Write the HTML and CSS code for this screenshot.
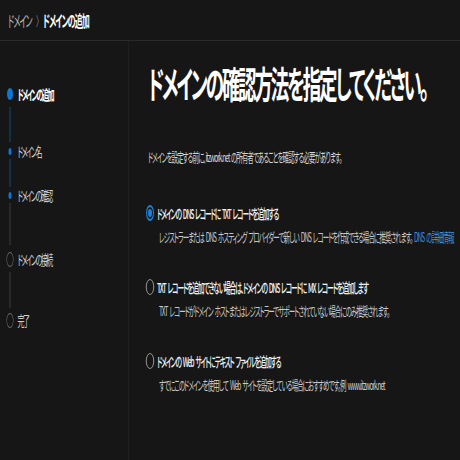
FILE: index.html
```html
<!DOCTYPE html>
<html lang="ja">
<head>
<meta charset="utf-8">
<title>ドメインの追加</title>
<link rel="stylesheet" href="styles.css">
</head>
<body>
<div class="app">
  <header class="crumbs">
    <span class="crumb">ドメイン</span>
    <span class="sep">〉</span>
    <span class="crumb current">ドメインの追加</span>
  </header>
  <div class="body">
    <nav class="steps">
      <div class="step active">
        <span class="marker"><span class="dot big"></span></span>
        <span class="label">ドメインの追加</span>
      </div>
      <div class="conn done c1"></div>
      <div class="step sub">
        <span class="marker"><span class="dot small"></span></span>
        <span class="label">ドメイン名</span>
      </div>
      <div class="conn done c2"></div>
      <div class="step sub">
        <span class="marker"><span class="dot small"></span></span>
        <span class="label">ドメインの確認</span>
      </div>
      <div class="conn c3"></div>
      <div class="step todo s4">
        <span class="marker"><span class="dot ring"></span></span>
        <span class="label">ドメインの接続</span>
      </div>
      <div class="conn c4"></div>
      <div class="step todo s5">
        <span class="marker"><span class="dot ring"></span></span>
        <span class="label">完了</span>
      </div>
    </nav>
    <main class="content">
      <h1 class="title">ドメインの確認方法を指定してください。</h1>
      <p class="intro">ドメインを設定する前に、itzwork.net の所有者であることを確認する必要があります。</p>
      <div class="options">
        <div class="option">
          <div class="opt-head">
            <span class="radio checked"></span>
            <span class="opt-label">ドメインの DNS レコードに TXT レコードを追加する</span>
          </div>
          <p class="opt-desc">レジストラーまたは DNS ホスティング プロバイダーで新しい DNS レコードを作成できる場合に推奨されます。 <a class="link" href="#">DNS の詳細情報</a></p>
        </div>
        <div class="option">
          <div class="opt-head">
            <span class="radio"></span>
            <span class="opt-label">TXT レコードを追加できない場合は、ドメインの DNS レコードに MX レコードを追加します</span>
          </div>
          <p class="opt-desc">TXT レコードがドメイン ホストまたはレジストラーでサポートされていない場合にのみ推奨されます。</p>
        </div>
        <div class="option">
          <div class="opt-head">
            <span class="radio"></span>
            <span class="opt-label">ドメインの Web サイトにテキスト ファイルを追加する</span>
          </div>
          <p class="opt-desc">すでにこのドメインを使用して Web サイトを設定している場合におすすめです。例 www.itzwork.net</p>
        </div>
      </div>
    </main>
  </div>
</div>
</body>
</html>
```
FILE: styles.css
```css
html, body {
  margin: 0;
  padding: 0;
  width: 460px;
  height: 460px;
  overflow: hidden;
  background: #161616;
}

.app {
  width: 920px;
  height: 460px;
  transform: scaleX(0.5);
  transform-origin: 0 0;
  display: flex;
  flex-direction: column;
  font-family: "Noto Sans CJK JP", "Noto Sans", sans-serif;
  font-feature-settings: "palt";
  color: #e6e6e6;
  background: #161616;
  overflow: hidden;
}

.crumbs {
  height: 40px;
  border-bottom: 1px solid #2a2a2a;
  display: flex;
  align-items: center;
  padding-left: 16px;
  font-size: 16px;
  letter-spacing: -1.9px;
  gap: 9px;
  flex: none;
}

.crumb { color: #b8b8b8; }
.crumb.current { color: #ffffff; font-weight: 700; }
.sep { color: #8a8a8a; font-size: 13px; }

.body {
  flex: 1;
  display: flex;
}

.steps {
  width: 256px;
  border-right: 1px solid #262626;
  flex: none;
  display: flex;
  flex-direction: column;
  padding-top: 45px;
}

.step {
  display: flex;
  align-items: center;
  height: 16px;
}

.marker {
  width: 36px;
  flex: none;
  display: flex;
  justify-content: center;
  align-items: center;
  margin-left: 2px;
}

.label {
  font-size: 14px;
  letter-spacing: -3px;
  color: #cfcfcf;
  margin-left: -3px;
  white-space: nowrap;
}

.step.active .label { color: #ffffff; font-weight: 700; }

.dot { display: block; border-radius: 50%; }
.dot.big { width: 12px; height: 12px; background: #0a78d4; }
.dot.small { width: 6px; height: 7px; background: #0a78d4; }
.dot.ring { border: 1.5px solid #6c6c6c; box-sizing: border-box; width: 14px; height: 15px; }

.conn {
  width: 2px;
  margin-left: 19px;
  background: #3c3c3c;
}
.conn.done { background: #114a80; }
.c1 { margin-top: 5px; height: 35px; margin-bottom: 1px; }
.c2 { height: 28px; }
.c3 { height: 42px; }
.s4 { margin-top: 6px; }
.c4 { margin-top: 5px; height: 36px; margin-bottom: 4px; }

.content {
  flex: 1;
  padding: 21px 0 0 39px;
  overflow: hidden;
}

.title {
  margin: 0;
  font-size: 37px;
  line-height: 43px;
  letter-spacing: -4.3px;
  font-weight: 700;
  color: #ffffff;
  white-space: nowrap;
}

.intro {
  margin: 44px 0 0 0;
  font-size: 13px;
  line-height: 16px;
  letter-spacing: -1.9px;
  word-spacing: 2px;
  color: #d4d4d4;
  white-space: nowrap;
}

.options {
  margin-top: 39px;
  display: flex;
  flex-direction: column;
  gap: 33px;
}

.opt-head {
  display: flex;
  align-items: center;
  height: 18px;
}

.radio {
  width: 16px;
  height: 16px;
  border-radius: 50%;
  border: 1.5px solid #bdbdbd;
  box-sizing: border-box;
  flex: none;
  margin-left: -4px;
  margin-right: 6px;
}

.radio.checked {
  border: 2px solid #1e7fd8;
  background: #161616;
  display: flex;
  align-items: center;
  justify-content: center;
}
.radio.checked::after {
  content: "";
  width: 8px;
  height: 8px;
  border-radius: 50%;
  background: #1e7fd8;
}

.opt-label {
  font-size: 13.5px;
  letter-spacing: -2.3px;
  word-spacing: 3px;
  color: #f2f2f2;
  font-weight: 500;
  white-space: nowrap;
}

.opt-desc {
  margin: 7px 0 0 22px;
  font-size: 13px;
  line-height: 16px;
  letter-spacing: -1.95px;
  word-spacing: 3px;
  color: #c8c8c8;
  white-space: nowrap;
}

.link {
  color: #3f8fdc;
  text-decoration: none;
}
```
